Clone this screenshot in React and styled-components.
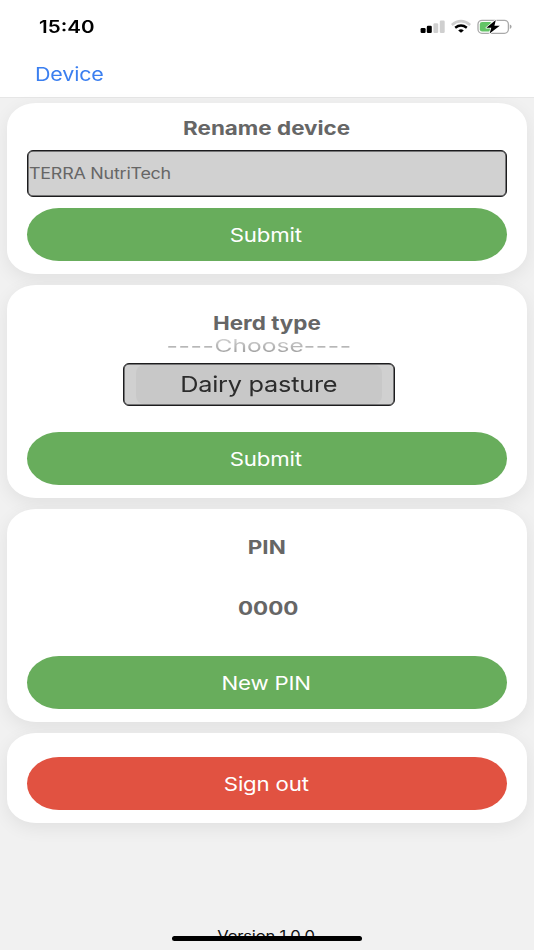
import React from 'react';
import styled, { createGlobalStyle } from 'styled-components';

const GlobalStyle = createGlobalStyle`
  * {
    box-sizing: border-box;
  }
  body {
    margin: 0;
    background: #f1f1f1;
    font-family: Inter, "Liberation Sans", sans-serif;
  }
`;

const Screen = styled.div`
  position: relative;
  display: flex;
  flex-direction: column;
  width: 534px;
  height: 950px;
  overflow: hidden;
  background: #f1f1f1;
`;

const Header = styled.header`
  height: 98px;
  background: #fff;
  border-bottom: 1px solid #e6e6e6;
`;

const StatusBar = styled.div`
  display: flex;
  justify-content: space-between;
  align-items: center;
  height: 53px;
  padding: 0 22px 0 39px;
`;

const StatusIcons = styled.svg`
  display: block;
  width: 92px;
  height: 20px;
`;

const NavBar = styled.nav`
  display: flex;
  align-items: center;
  height: 43px;
  padding-left: 34.5px;
`;

// Wide lettering: every label is stretched along the x axis
const Label = styled.span`
  display: inline-block;
  flex: none;
  font-size: ${({ $size }) => $size || 18.7}px;
  font-weight: ${({ $weight }) => $weight || 400};
  line-height: 22px;
  letter-spacing: ${({ $spacing }) => $spacing || 0}px;
  color: ${({ $color }) => $color || 'inherit'};
  white-space: pre;
  transform: translateY(${({ $drop = 0.8 }) => $drop}px) scaleX(${({ $stretch }) => $stretch || 1.2});
  transform-origin: ${({ $origin }) => $origin || 'center'};
`;

const Content = styled.main`
  display: flex;
  flex-direction: column;
  gap: 11px;
  padding: 5px 7px 0 6.5px;
`;

const Card = styled.section`
  display: flex;
  flex-direction: column;
  align-items: center;
  height: ${({ $height }) => $height}px;
  padding: ${({ $top }) => $top}px 20.5px 13px;
  background: #fff;
  border-radius: 29px / 24px;
  box-shadow: 0 5px 18px rgba(0, 0, 0, 0.07);
`;

const NameField = styled.div`
  display: flex;
  align-items: center;
  width: 100%;
  height: 47.5px;
  margin-top: 10.5px;
  padding-left: 1px;
  background: #d1d1d1;
  border: 1px solid #1c1c1e;
  border-radius: 6px;
  box-shadow: inset 0 0 0 0.5px #1c1c1e;
`;

const Button = styled.button`
  display: flex;
  justify-content: center;
  align-items: center;
  flex: none;
  width: 100%;
  height: 53px;
  margin-top: auto;
  padding: 0 1px 0 0;
  border: 0;
  border-radius: 32px / 26.5px;
  background: ${({ $danger }) => ($danger ? '#e15241' : '#68ad5c')};
  color: #fff;
  font-family: inherit;
`;

const Picker = styled.div`
  display: flex;
  flex-direction: column;
  align-items: center;
  margin-top: 1px;
  margin-right: 16px;
`;

const Placeholder = styled(Label)`
  color: transparent;
  background: linear-gradient(#cfcfcf 20%, #9e9e9e 85%);
  background-clip: text;
`;

const Dash = styled.span`
  letter-spacing: 0.5px;
  font-weight: 500;
`;

const PickerField = styled.div`
  display: flex;
  justify-content: center;
  width: 272px;
  height: 42.5px;
  margin-top: 6px;
  background: #d0d0d0;
  border: 1px solid #1c1c1e;
  border-radius: 6px;
  box-shadow: inset 0 0 0 0.5px #1c1c1e;
`;

const PickerValue = styled.div`
  display: flex;
  justify-content: center;
  align-items: center;
  width: 246px;
  margin: 1px 0;
  background: #c8c8c8;
  border-radius: 8px;
`;

const PinValue = styled.div`
  margin-top: 39px;
  padding-left: 2px;
`;

const Version = styled.footer`
  position: absolute;
  left: 0;
  right: 2px;
  top: 924px;
  text-align: center;
`;

const HomeBar = styled.div`
  position: absolute;
  left: 171.5px;
  top: 935.5px;
  width: 190.5px;
  height: 5.5px;
  border-radius: 3px;
  background: #000;
`;

const Icons = () => (
  <StatusIcons viewBox="0 0 92 20">
    <g fill="#000">
      <rect x="0.6" y="11" width="5" height="5" rx="1.2" />
      <rect x="6.8" y="8.8" width="5" height="7.2" rx="1.2" />
    </g>
    <g fill="#cfcfcf">
      <rect x="13.4" y="6.2" width="4.8" height="9.8" rx="1.2" />
      <rect x="19.8" y="3.5" width="4.9" height="12.5" rx="1.2" />
    </g>
    <path d="M31.8 7.9 Q41 0.5 50.2 7.9" fill="none" stroke="#cfcfcf" strokeWidth="2.6" />
    <path d="M35.2 10.7 Q41 6.3 46.8 10.7" fill="none" stroke="#000" strokeWidth="2.5" />
    <path d="M38.2 13.4 Q41 11.2 43.8 13.4 L41 15.8 Z" fill="#000" />
    <rect x="58" y="3.3" width="30.4" height="13" rx="4" fill="none" stroke="#a9a9a9" strokeWidth="1.3" />
    <path d="M89.8 7.6 Q91.6 8.2 91.6 9.8 Q91.6 11.4 89.8 12 Z" fill="#a5a5a5" />
    <rect x="59.8" y="5.1" width="12" height="9.4" rx="2.3" fill="#63c466" />
    <path
      d="M75.8 3 L66.3 10.8 H71.3 L69.6 16.6 L79.8 8.7 H74.4 Z"
      fill="#000"
      stroke="#fff"
      strokeWidth="1.6"
      paintOrder="stroke"
      strokeLinejoin="round"
    />
  </StatusIcons>
);

const Title = ({ children }) => (
  <Label $weight={700} $color="#666">{children}</Label>
);

const ButtonText = ({ children }) => (
  <Label $size={19} $spacing={-0.15} $stretch={1.17}>{children}</Label>
);

const App = () => {
  return (
    <>
      <GlobalStyle />
      <Screen>
        <Header>
          <StatusBar>
            <Label $size={17} $weight={600} $color="#000" $origin="left" $drop={0} $stretch={1.21}>15:40</Label>
            <Icons />
          </StatusBar>
          <NavBar>
            <Label $color="#3b7ff0" $origin="left" $drop={0} $spacing={-0.15} $stretch={1.15}>Device</Label>
          </NavBar>
        </Header>
        <Content>
          <Card $height={171} $top={14}>
            <Title>Rename device</Title>
            <NameField>
              <Label $size={15.5} $color="#666" $origin="left" $spacing={-0.2} $stretch={1.155}>TERRA NutriTech</Label>
            </NameField>
            <Button><ButtonText>Submit</ButtonText></Button>
          </Card>
          <Card $height={213} $top={27}>
            <Title>Herd type</Title>
            <Picker>
              <Placeholder $size={17.8} $stretch={1.38} $drop={0}>
                <Dash>----</Dash>Choose<Dash>----</Dash>
              </Placeholder>
              <PickerField>
                <PickerValue>
                  <Label $size={21.8} $color="#2c2c2c" $drop={0} $spacing={-0.2} $stretch={1.16}>Dairy pasture</Label>
                </PickerValue>
              </PickerField>
            </Picker>
            <Button><ButtonText>Submit</ButtonText></Button>
          </Card>
          <Card $height={213} $top={27}>
            <Title>PIN</Title>
            <PinValue><Title>0000</Title></PinValue>
            <Button><ButtonText>New PIN</ButtonText></Button>
          </Card>
          <Card $height={90} $top={24}>
            <Button $danger><ButtonText>Sign out</ButtonText></Button>
          </Card>
        </Content>
        <Version>
          <Label $size={14.3} $color="#111" $spacing={-0.15} $stretch={1.16}>Version 1.0.0</Label>
        </Version>
        <HomeBar />
      </Screen>
    </>
  );
};

export default App;
